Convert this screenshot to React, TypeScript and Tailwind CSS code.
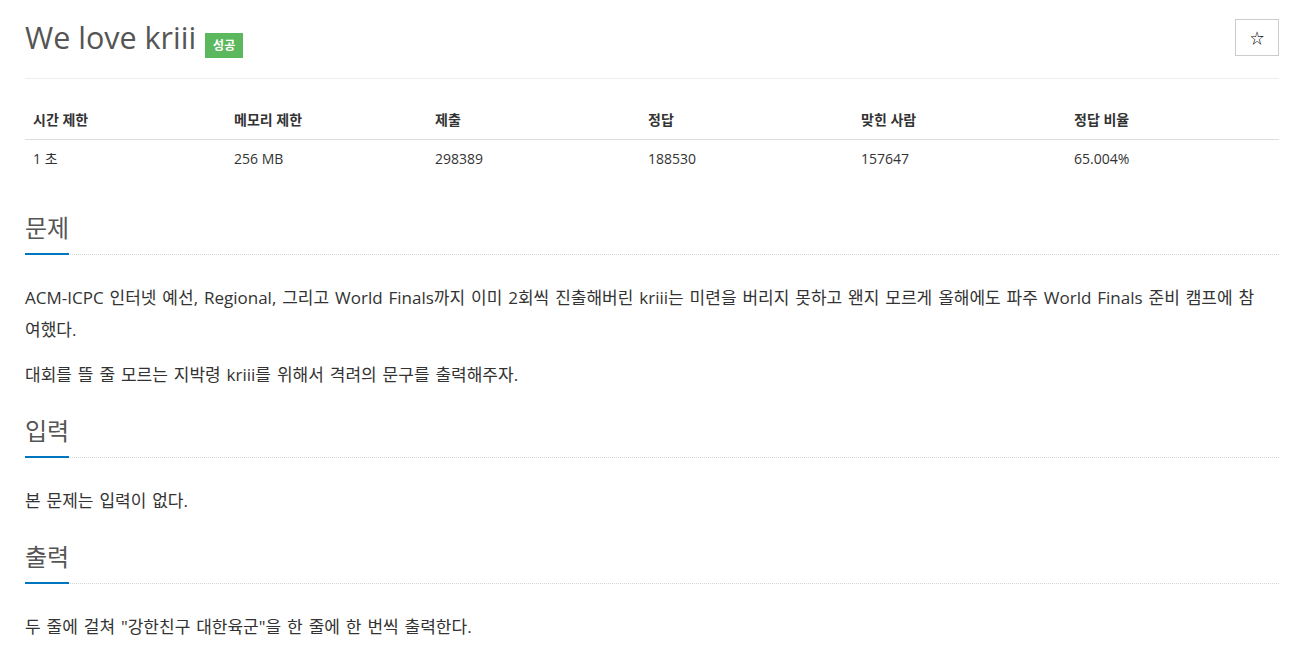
import React from "react";

const font = { fontFamily: '"Open Sans", "Noto Sans CJK KR", sans-serif' };

function Headline({ title }: { title: string }) {
  return (
    <div className="flex border-b border-dotted border-[#d6d6d6]">
      <h2 className="text-[24px] leading-[26px] text-[#555] pb-[12px] border-b-2 border-[#0076c0] mb-[-1px] font-normal">
        {title}
      </h2>
    </div>
  );
}

function Section({ title, first, children }: { title: string; first?: boolean; children: React.ReactNode }) {
  return (
    <section className={first ? "mt-[37px]" : "mt-[27px]"}>
      <Headline title={title} />
      <div className="mt-[27px] max-w-[1240px] text-[17px] leading-[32px] text-[#333] [word-spacing:1.5px] flex flex-col gap-[13px]">
        {children}
      </div>
    </section>
  );
}

export default function App() {
  const heads = ["시간 제한", "메모리 제한", "제출", "정답", "맞힌 사람", "정답 비율"];
  const vals = ["1 초", "256 MB", "298389", "188530", "157647", "65.004%"];
  return (
    <div className="bg-white min-h-[656px] pl-[25px] pr-[15px] pt-[19px] text-[#333]" style={font}>
      <div className="flex justify-between items-start border-b border-[#eee] h-[60px]">
        <div className="flex items-start pt-[1px]">
          <h1 className="text-[30.5px] leading-[35px] text-[#555] font-normal">We love kriii</h1>
          <span className="ml-[9px] mt-[13px] inline-flex items-center justify-center w-[38px] h-[25px] bg-[#5cb85c] text-white text-[12px] font-bold">
            성공
          </span>
        </div>
        <button className="w-[44px] h-[37px] border border-[#ccc] bg-white flex items-center justify-center text-[14px] text-black">
          ☆
        </button>
      </div>

      <div className="mt-[22px] grid grid-cols-[201px_201px_213px_213px_213px_213px] text-[14px]">
        {heads.map((h) => (
          <div key={h} className="px-[8px] pt-[9px] pb-[9px] leading-[20px] font-bold border-b border-[#ddd]">
            {h}
          </div>
        ))}
        {vals.map((v) => (
          <div key={v} className="px-[8px] pt-[9px] pb-[9px] leading-[20px]">
            {v}
          </div>
        ))}
      </div>

      <Section title="문제" first>
        <p>
          ACM-ICPC 인터넷 예선, Regional, 그리고 World Finals까지 이미 2회씩 진출해버린 kriii는 미련을 버리지 못하고 왠지 모르게 올해에도 파주 World Finals 준비 캠프에 참여했다.
        </p>
        <p>대회를 뜰 줄 모르는 지박령 kriii를 위해서 격려의 문구를 출력해주자.</p>
      </Section>

      <Section title="입력">
        <p>본 문제는 입력이 없다.</p>
      </Section>

      <Section title="출력">
        <p>두 줄에 걸쳐 "강한친구 대한육군"을 한 줄에 한 번씩 출력한다.</p>
      </Section>
    </div>
  );
}
